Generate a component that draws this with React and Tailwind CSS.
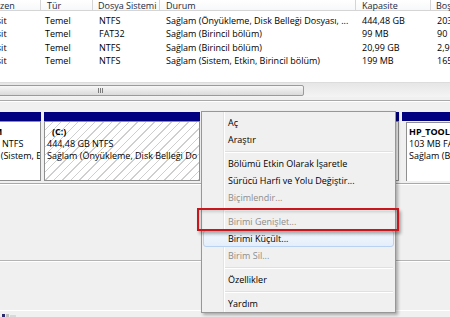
const rows = [
  { yer: 'Basit', tur: 'Temel', fs: 'NTFS', durum: 'Sağlam (Önyükleme, Disk Belleği Dosyası, ...', kap: '444,48 GB', bos: '203,36 GB' },
  { yer: 'Basit', tur: 'Temel', fs: 'FAT32', durum: 'Sağlam (Birincil bölüm)', kap: '99 MB', bos: '90 MB' },
  { yer: 'Basit', tur: 'Temel', fs: 'NTFS', durum: 'Sağlam (Birincil bölüm)', kap: '20,99 GB', bos: '2,91 GB' },
  { yer: 'Basit', tur: 'Temel', fs: 'NTFS', durum: 'Sağlam (Sistem, Etkin, Birincil bölüm)', kap: '199 MB', bos: '165 MB' },
];

// sağ tık menüsü
const menu = [
  { label: 'Aç' },
  { label: 'Araştır' },
  'sep',
  { label: 'Bölümü Etkin Olarak İşaretle' },
  { label: 'Sürücü Harfi ve Yolu Değiştir...' },
  { label: 'Biçimlendir...', off: true },
  'sep',
  { label: 'Birimi Genişlet...', off: true },
  { label: 'Birimi Küçült...', hot: true },
  { label: 'Birim Sil...', off: true },
  'sep',
  { label: 'Özellikler' },
  'sep',
  { label: 'Yardım' },
];

function Header() {
  return (
    <div className="flex h-[11px] border-b border-[#d5d5d5] bg-gradient-to-b from-white to-[#f7f8fa] text-[#1e2a3a] leading-[11px]">
      <div className="w-[62px] shrink-0 border-r border-[#d5d5d5] pl-[9px]">Düzen</div>
      <div className="w-[52px] shrink-0 border-r border-[#d5d5d5] pl-[6px]">Tür</div>
      <div className="w-[67px] shrink-0 border-r border-[#d5d5d5] pl-[5px]">Dosya Sistemi</div>
      <div className="w-[196px] shrink-0 border-r border-[#d5d5d5] pl-[6px]">Durum</div>
      <div className="w-[75px] shrink-0 border-r border-[#d5d5d5] pl-[6px]">Kapasite</div>
      <div className="w-[80px] shrink-0 pl-[5px]">Boş Alan</div>
    </div>
  );
}

function Partition({ name, size, state, hatched, wide, offset }) {
  return (
    <div className={`flex flex-col ${wide}`}>
      <div className="h-[9px] bg-[#000080]" />
      <div className={`h-[60px] overflow-hidden border border-[#8f8f8f] ${hatched ? 'bg-[repeating-linear-gradient(135deg,#ffffff_0px,#ffffff_5px,#cfcfcf_5px,#cfcfcf_6px)]' : 'bg-white'}`}>
        {name && (
          <div className={`whitespace-nowrap pt-[4px] text-black leading-[12px] ${offset}`}>
            <div className="font-bold">{name}</div>
            <div>{size}</div>
            <div>{state}</div>
          </div>
        )}
      </div>
    </div>
  );
}

export default function App() {
  return (
    <div className="relative flex h-[317px] w-[450px] flex-col overflow-hidden bg-[#f0f0f0] font-['Open_Sans','Noto_Sans',sans-serif] text-[9px]">
      {/* birim listesi */}
      <div className="h-[82px] shrink-0 overflow-hidden bg-white">
        <div className="ml-[-21px] w-[600px]">
          <Header />
          <div className="pt-[3px] text-black">
            {rows.map((r, i) => (
              <div key={i} className="flex h-[13.4px] leading-[13.4px] whitespace-nowrap">
                <div className="w-[62px] shrink-0 pl-[7px]">{r.yer}</div>
                <div className="w-[52px] shrink-0 pl-[4px]">{r.tur}</div>
                <div className="w-[67px] shrink-0 pl-[6px]">{r.fs}</div>
                <div className="w-[196px] shrink-0 pl-[6px]">{r.durum}</div>
                <div className="w-[75px] shrink-0 pl-[6px]">{r.kap}</div>
                <div className="w-[80px] shrink-0 pl-[6px]">{r.bos}</div>
              </div>
            ))}
          </div>
        </div>
      </div>

      {/* yatay kaydırma çubuğu */}
      <div className="flex h-[15px] shrink-0 items-center overflow-hidden border-t border-[#dcdcdc] bg-gradient-to-b from-[#e6e6e6] to-[#f4f4f4]">
        <div className="ml-[-104px] flex h-[11px] w-[408px] shrink-0 items-center justify-center rounded-[2px] border border-[#9a9a9a] bg-gradient-to-b from-[#f7f7f7] to-[#dadada]">
          <div className="flex gap-[1px]">
            <div className="h-[5px] w-px bg-[#7a7a7a]" />
            <div className="h-[5px] w-px bg-[#7a7a7a]" />
            <div className="h-[5px] w-px bg-[#7a7a7a]" />
          </div>
        </div>
      </div>

      {/* ayırıcı */}
      <div className="mt-[3px] h-px shrink-0 bg-[#a9a9a9]" />
      <div className="h-px shrink-0 bg-white" />

      {/* disk görünümü */}
      <div className="flex h-[81px] shrink-0 gap-[3px] pt-[10px]">
        <div className="w-[41px] shrink-0 overflow-hidden">
          <div className="ml-[-37px] w-[78px]">
            <Partition wide="w-[78px]" offset="pl-[4px]" name="SYSTEM" size="199 MB NTFS" state="Sağlam (Sistem, Etkin, Birincil bölüm)" />
          </div>
        </div>
        <Partition wide="w-[156px] shrink-0" offset="pl-[2px]" hatched name={<span className="pl-[5px]">(C:)</span>} size="444,48 GB NTFS" state="Sağlam (Önyükleme, Disk Belleği Do" />
        {/* menünün altında kalan bölüm */}
        <Partition wide="w-[196px] shrink-0" />
        <div className="flex w-[60px] shrink-0 flex-col">
          <div className="h-[9px] bg-[#000080]" />
          <div className="flex h-[60px] bg-[#f0f0f0] pl-[4px] pt-[1px]">
            <div className="flex-1 overflow-hidden border-l border-t border-[#8f8f8f] bg-white">
              <div className="whitespace-nowrap pl-[2px] pt-[3px] text-black leading-[12px]">
                <div className="font-bold">HP_TOOLS</div>
                <div>103 MB FAT32</div>
                <div>Sağlam (Birincil bölüm)</div>
              </div>
            </div>
          </div>
        </div>
      </div>

      <div className="h-px shrink-0 bg-[#a9a9a9]" />
      <div className="h-px shrink-0 bg-white" />
      <div className="h-[75px] shrink-0" />
      <div className="h-px shrink-0 bg-[#b4b4b4]" />
      <div className="h-px shrink-0 bg-white" />
      <div className="h-[48px] shrink-0" />
      <div className="h-px shrink-0 bg-white" />
      <div className="flex h-[7px] shrink-0 items-end gap-[1px] pl-[2px]">
        <div className="h-[4px] w-[3px] bg-[#2a2a6a]" />
        <div className="h-[4px] w-[3px] bg-[#bfbfbf]" />
        <div className="h-[3px] w-[6px] bg-[#d9d9d9]" />
      </div>

      {/* bağlam menüsü */}
      <div className="absolute left-[201px] top-[111px] flex h-[202px] w-[195px] flex-col border border-[#979797] bg-[#f0f0f0] pt-[2px] text-[9px] shadow-[2px_2px_3px_rgba(0,0,0,0.3)]">
        <div className="absolute bottom-0 left-[21px] top-0 w-px bg-[#e2e3e3]" />
        <div className="absolute bottom-0 left-[22px] top-0 w-px bg-white" />
        {menu.map((m, i) =>
          m === 'sep' ? (
            <div key={i} className="relative flex h-[7px] shrink-0 flex-col justify-center pl-[23px] pr-[2px]">
              <div className="h-px bg-[#e0e0e0]" />
              <div className="h-px bg-white" />
            </div>
          ) : m.hot ? (
            <div key={i} className="relative mx-[1px] flex h-[17px] shrink-0 items-center rounded-[3px] border border-[#b9d2f1] bg-gradient-to-b from-[#f2f7fd] to-[#e4eefb] pl-[24px] text-black">
              {m.label}
            </div>
          ) : (
            <div key={i} className={`relative flex h-[17px] shrink-0 items-center pl-[26px] ${m.off ? 'text-[#8d8d8d]' : 'text-black'}`}>
              {m.label}
            </div>
          )
        )}
      </div>

      {/* kırmızı işaret */}
      <div className="absolute left-[197px] top-[208px] h-[23px] w-[202px] border-2 border-[#c8161d] shadow-[inset_2px_2px_3px_rgba(0,0,0,0.15),2px_3px_3px_rgba(0,0,0,0.3)]" />
    </div>
  );
}
